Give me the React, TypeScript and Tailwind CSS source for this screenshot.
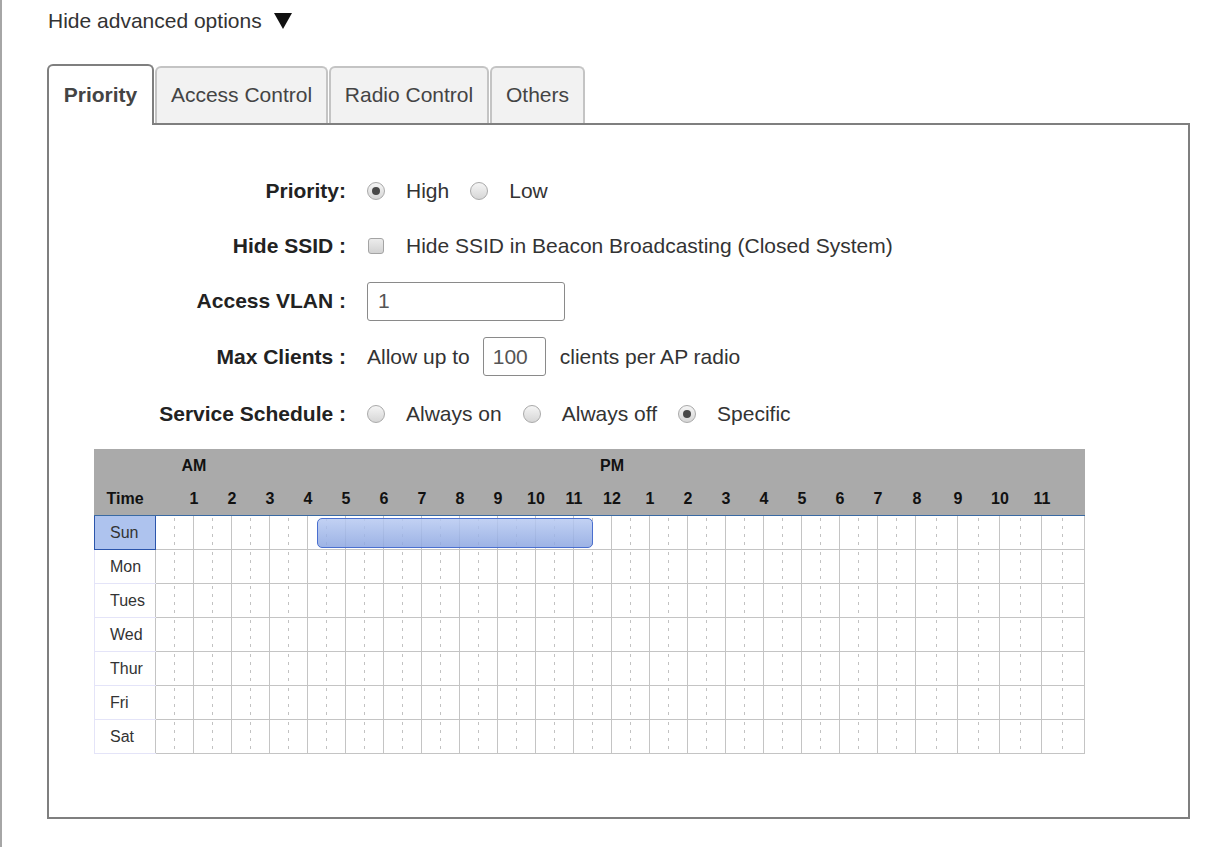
import React from "react";

const days = ["Sun", "Mon", "Tues", "Wed", "Thur", "Fri", "Sat"];

// hour columns: width class + half width class (where the dashed half-hour line sits)
const hourCols: { w: string; half: string }[] = [
  ...Array.from({ length: 20 }, () => ({ w: "w-[38px]", half: "w-[18px]" })),
  { w: "w-[42px]", half: "w-[20px]" },
  { w: "w-[42px]", half: "w-[20px]" },
  { w: "w-[42px]", half: "w-[20px]" },
  { w: "w-[43px]", half: "w-[20px]" },
];

const hourLabels = [
  ...Array.from({ length: 19 }, (_, i) => ({ t: String((i % 12) + 1), w: "w-[38px]" })),
  { t: "8", w: "w-[40px]" },
  { t: "9", w: "w-[42px]" },
  { t: "10", w: "w-[42px]" },
  { t: "11", w: "w-[42px]" },
];

function Radio({ checked }: { checked?: boolean }) {
  return (
    <span className="flex h-[18px] w-[18px] shrink-0 items-center justify-center rounded-full border border-[#a9a9a9] bg-linear-to-b from-[#f5f5f5] to-[#d6d6d6]">
      {checked && <span className="h-[8px] w-[8px] rounded-full bg-[#484848]" />}
    </span>
  );
}

function Option({ label, checked, first }: { label: string; checked?: boolean; first?: boolean }) {
  return (
    <div className={`flex items-center ${first ? "" : "ml-[21px]"}`}>
      <Radio checked={checked} />
      <span className="ml-[21px]">{label}</span>
    </div>
  );
}

function FormRow({ label, h, children }: { label: string; h: string; children: React.ReactNode }) {
  return (
    <div className={`flex items-center ${h}`}>
      <div className="w-[297px] text-right font-bold text-[#222]">{label}</div>
      <div className="ml-[21px] flex items-center text-[#333]">{children}</div>
    </div>
  );
}

function HourCell({ w, half }: { w: string; half: string }) {
  return (
    <div className={`${w} flex h-[34px] border-r border-b border-[#c4c4c4]`}>
      <div className={half} />
      <div className="h-[33px] w-px bg-[repeating-linear-gradient(to_bottom,transparent_0_2px,#c2c2c2_2px_5px,transparent_5px_8px)]" />
    </div>
  );
}

function Schedule() {
  return (
    <div className="ml-[45px] mt-[6px] w-[991px] text-[16px]">
      <div className="h-[67px] border-b border-[#3a6aa3] bg-[#aaaaaa] font-bold text-[#111]">
        <div className="flex h-[33px] items-center">
          <div className="w-[81px]" />
          <div className="w-[38px] text-center">AM</div>
          <div className="w-[380px]" />
          <div className="w-[38px] text-center">PM</div>
        </div>
        <div className="flex h-[33px] items-center">
          <div className="w-[62px] text-center">Time</div>
          <div className="w-[19px]" />
          {hourLabels.map((l, i) => (
            <div key={i} className={`${l.w} text-center`}>
              {i === 11 ? "12" : i > 11 && i < 19 ? String(i - 11) : l.t}
            </div>
          ))}
        </div>
      </div>
      {days.map((d, r) => (
        <div key={d} className="relative flex">
          {r === 0 ? (
            <div className="flex h-[34px] w-[62px] items-center border-x border-b border-[#2b55ab] bg-[#aec3ee] pl-[15px] text-[#333]">
              {d}
            </div>
          ) : (
            <div className="flex h-[34px] w-[62px] items-center border-l border-b border-[#e4e4f8] pl-[15px] text-[#333]">
              <span className="flex-1">{d}</span>
              <span className="h-full w-px bg-[#c4c4c4]" />
            </div>
          )}
          {hourCols.map((c, i) => (
            <HourCell key={i} w={c.w} half={c.half} />
          ))}
          {r === 0 && (
            <div className="absolute left-[223px] top-[2px] h-[30px] w-[276px] rounded-[5px] border-[1.5px] border-[#4a6fcf] bg-linear-to-b from-[#b7c9f1]/85 to-[#8ca6e1]/85" />
          )}
        </div>
      ))}
    </div>
  );
}

export default function App() {
  return (
    <div className="flex min-h-screen bg-white font-['Liberation_Sans',Arial,sans-serif] text-[21px]">
      <div className="w-[2px] shrink-0 bg-[#a6a6a6]" />
      <div className="ml-[45px]">
        <div className="mt-[9px] flex h-[24px] items-center leading-[24px] text-[#333]">
          <span className="ml-[1px]">Hide advanced options</span>
          <svg width="18" height="16" viewBox="0 0 18 16" className="ml-[12px]">
            <polygon points="0,0 18,0 9,16" fill="#111" />
          </svg>
        </div>

        <div className="relative z-10 mt-[31px] flex items-end">
          <div className="flex h-[61px] w-[107px] items-center justify-center rounded-t-[6px] border-2 border-b-0 border-[#7f7f7f] bg-white pb-[2px] font-bold text-[#444]">
            Priority
          </div>
          <div className="mb-[2px] ml-px flex h-[57px] w-[173px] items-center justify-center rounded-t-[6px] border-2 border-b-0 border-[#c4c4c4] bg-[#f2f2f2] pb-[2px] text-[#444]">
            Access Control
          </div>
          <div className="mb-[2px] ml-px flex h-[57px] w-[160px] items-center justify-center rounded-t-[6px] border-2 border-b-0 border-[#c4c4c4] bg-[#f2f2f2] pb-[2px] text-[#444]">
            Radio Control
          </div>
          <div className="mb-[2px] ml-px flex h-[57px] w-[95px] items-center justify-center rounded-t-[6px] border-2 border-b-0 border-[#c4c4c4] bg-[#f2f2f2] pb-[2px] text-[#444]">
            Others
          </div>
        </div>

        <div className="-mt-[2px] h-[696px] w-[1143px] border-2 border-[#7f7f7f] pt-[38px]">
          <FormRow label="Priority:" h="h-[55px]">
            <Option label="High" checked first />
            <Option label="Low" />
          </FormRow>
          <FormRow label="Hide SSID :" h="h-[55px]">
            <span className="ml-px h-[16px] w-[16px] rounded-[3px] border border-[#a4a4a4] bg-linear-to-b from-[#ececec] to-[#d2d2d2]" />
            <span className="ml-[22px]">Hide SSID in Beacon Broadcasting (Closed System)</span>
          </FormRow>
          <FormRow label="Access VLAN :" h="h-[56px]">
            <div className="flex h-[39px] w-[198px] items-center rounded-[3px] border-[1.5px] border-[#8a8a8a] pl-[10px] text-[#555]">
              1
            </div>
          </FormRow>
          <FormRow label="Max Clients :" h="h-[55px]">
            <span>Allow up to</span>
            <div className="ml-[13px] flex h-[39px] w-[63px] items-center rounded-[3px] border-[1.5px] border-[#8a8a8a] pl-[9px] text-[#555]">
              100
            </div>
            <span className="ml-[14px]">clients per AP radio</span>
          </FormRow>
          <FormRow label="Service Schedule :" h="h-[59px]">
            <Option label="Always on" first />
            <Option label="Always off" />
            <Option label="Specific" checked />
          </FormRow>
          <Schedule />
        </div>
      </div>
    </div>
  );
}
